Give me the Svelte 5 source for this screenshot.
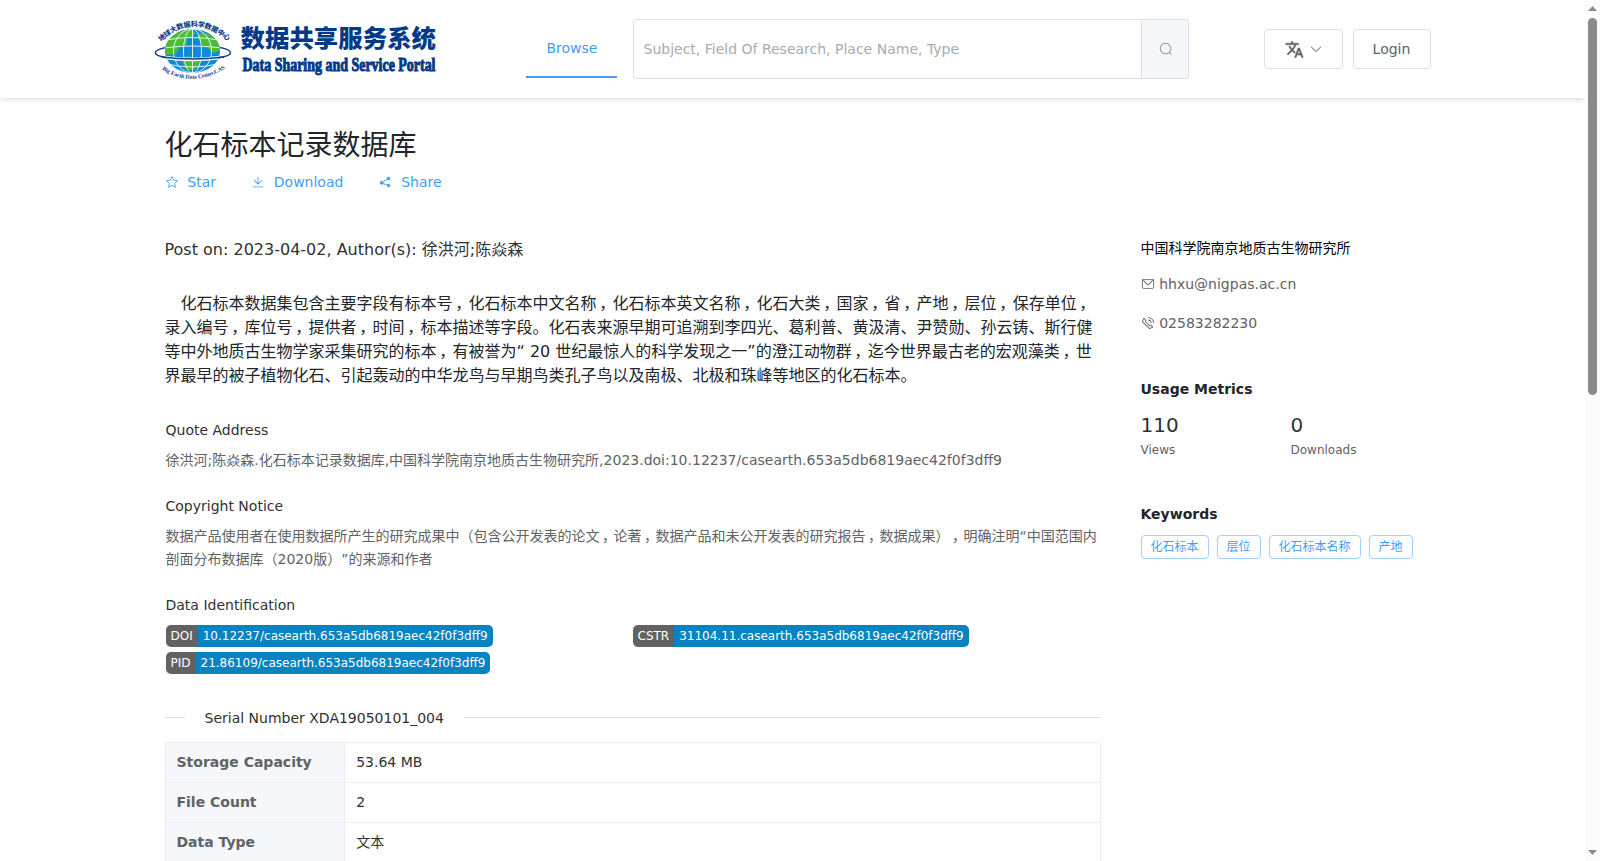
<script>
  const icons = {
    search: 'm795.904 750.72 124.992 124.928a32 32 0 0 1-45.248 45.248L750.656 795.904a416 416 0 1 1 45.248-45.248zM480 832a352 352 0 1 0 0-704 352 352 0 0 0 0 704z',
    down: 'M831.872 340.864 512 652.672 192.128 340.864a30.592 30.592 0 0 0-42.752 0 29.12 29.12 0 0 0 0 41.6L489.664 714.24a32 32 0 0 0 44.672 0l340.288-331.712a29.12 29.12 0 0 0 0-41.728 30.592 30.592 0 0 0-42.752 0z',
    download: 'M160 832h704a32 32 0 1 1 0 64H160a32 32 0 1 1 0-64zm384-253.696 236.288-236.352 45.248 45.248L508.8 704 192 387.2l45.248-45.248L480 584.704V128h64v450.304z',
    share: 'm679.872 348.8-301.76 188.608a127.808 127.808 0 0 1 5.12 52.16l279.936 104.96a128 128 0 1 1-22.464 59.904l-279.872-104.96a128 128 0 1 1-16.64-166.272l301.696-188.608a128 128 0 1 1 33.92 54.272z',
    message: 'M128 224v512a64 64 0 0 0 64 64h640a64 64 0 0 0 64-64V224H128zm0-64h768a64 64 0 0 1 64 64v512a128 128 0 0 1-128 128H192A128 128 0 0 1 64 736V224a64 64 0 0 1 64-64z M904 224 656.512 506.88a192 192 0 0 1-289.024 0L120 224h784zm-698.944 0 210.56 240.704a128 128 0 0 0 192.704 0L818.944 224H205.056z',
    phone: 'M79.36 432.256 591.744 944.64a32 32 0 0 0 35.2 6.784l253.44-108.544a32 32 0 0 0 9.984-52.032l-153.856-153.92a32 32 0 0 0-36.928-6.016l-69.888 34.944L358.08 394.24l35.008-69.888a32 32 0 0 0-5.952-36.928L233.152 133.568a32 32 0 0 0-52.032 10.048L72.512 397.056a32 32 0 0 0 6.784 35.2zm60.48-29.952 81.536-190.08L325.568 316.48l-24.64 49.216-20.608 41.216 32.576 32.64 271.552 271.552 32.64 32.64 41.216-20.672 49.28-24.576 104.192 104.128-190.08 81.472L139.84 402.304zM512 320v-64a256 256 0 0 1 256 256h-64a192 192 0 0 0-192-192zm0-192V64a448 448 0 0 1 448 448h-64a384 384 0 0 0-384-384z'
  };
  const summary = [
    '　化石标本数据集包含主要字段有标本号，化石标本中文名称，化石标本英文名称，化石大类，国家，省，产地，层位，保存单位，',
    '录入编号，库位号，提供者，时间，标本描述等字段。化石表来源早期可追溯到李四光、葛利普、黄汲清、尹赞勋、孙云铸、斯行健',
    '等中外地质古生物学家采集研究的标本，有被誉为“ 20 世纪最惊人的科学发现之一”的澄江动物群，迄今世界最古老的宏观藻类，世',
    '界最早的被子植物化石、引起轰动的中华龙鸟与早期鸟类孔子鸟以及南极、北极和珠峰等地区的化石标本。'
  ];
  const notice = [
    '数据产品使用者在使用数据所产生的研究成果中（包含公开发表的论文，论著，数据产品和未公开发表的研究报告，数据成果），明确注明“中国范围内',
    '剖面分布数据库（2020版）”的来源和作者'
  ];
  const ids = [
    ['DOI', '10.12237/casearth.653a5db6819aec42f0f3dff9'],
    ['CSTR', '31104.11.casearth.653a5db6819aec42f0f3dff9'],
    ['PID', '21.86109/casearth.653a5db6819aec42f0f3dff9']
  ];
  const rows = [['Storage Capacity', '53.64 MB'], ['File Count', '2'], ['Data Type', '文本']];
  const keywords = ['化石标本', '层位', '化石标本名称', '产地'];
</script>

{#snippet icon(name)}
  <svg class="icon" viewBox="0 0 1024 1024"><path fill="currentColor" d={icons[name]} /></svg>
{/snippet}

{#snippet prose(line)}
  <span class="line">{#each line.split('，') as part, i}{#if i}<span class="comma">，</span>{/if}{part}{/each}</span>
{/snippet}

<div class="app">
  <div class="page">
    <header>
      <svg class="logo" width="290" height="68" viewBox="150 14 290 68">
        <defs>
          <clipPath id="globe"><ellipse cx="192.5" cy="51" rx="27.5" ry="22" /></clipPath>
          <path id="arcTop" d="M161 42 Q193 11 229 42" />
          <path id="arcBottom" d="M162 69.500 Q192 89 226 68" />
        </defs>
        <path d="M169 47C151 50 150.500 55.500 169 58C184 60 203 60 217 58C235 55.500 235 50 217 47" fill="none" stroke="#123f8c" stroke-width="1.5" />
        <g clip-path="url(#globe)">
          <rect x="164" y="28" width="58" height="46" fill="#1189d8" />
          <path d="M164 47Q168 33 182 30L190 29L196 33L192 37L187 39L187 44L180 47L176 53L170 55L164 54Z" fill="#4dbb35" />
          <path d="M201 33L210 34L218 42L221 50L214 53L209 49L204 47L200 42L197 37Z M187 56L198 58L200 63L193 71L186 69L182 61Z" fill="#4dbb35" />
          <g fill="none" stroke="#eefaff" stroke-width=".9">
            <ellipse cx="192.5" cy="51" rx="9" ry="22" />
            <ellipse cx="192.5" cy="51" rx="19" ry="22" />
            <path d="M192.500 28V74M166 40Q192 35 219 40M164 48Q192 44 222 48M167 64Q192 70 218 64" />
          </g>
          <path d="M162 57Q192 62 224 57" stroke="#fff" stroke-width="3.400" fill="none" />
        </g>
        <path d="M162 57Q192 61 224 57" stroke="#123f8c" stroke-width="1.400" fill="none" />
        <text class="ring-cn"><textPath href="#arcTop" textLength="75">地球大数据科学数据中心</textPath></text>
        <text class="ring-en"><textPath href="#arcBottom" textLength="67">Big Earth Data Center,CAS</textPath></text>
        <text class="name-cn" x="240.500" y="46.500" textLength="195.500">数据共享服务系统</text>
        <text class="name-en" x="242.500" y="71" textLength="193" lengthAdjust="spacingAndGlyphs">Data Sharing and Service Portal</text>
      </svg>
      <nav>Browse</nav>
      <div class="search">
        <div class="field">Subject, Field Of Research, Place Name, Type</div>
        <div class="go">{@render icon('search')}</div>
      </div>
      <div class="button lang">
        <svg width="19" height="19" viewBox="0 0 24 24"><path fill="currentColor" stroke="currentColor" stroke-width=".6" d="M12.870 15.070l-2.540-2.510.030-.030A17.520 17.520 0 0 0 14.070 6H17V4h-7V2H8v2H1v2h11.170C11.500 7.920 10.440 9.750 9 11.350 8.070 10.320 7.300 9.190 6.690 8h-2c.730 1.630 1.730 3.170 2.980 4.560l-5.090 5.020L4 19l5-5 3.110 3.110.760-2.040zM18.500 10h-2L12 22h2l1.120-3h4.750L21 22h2l-4.500-12zm-2.620 7l1.620-4.330L19.120 17h-3.240z" /></svg>
        {@render icon('down')}
      </div>
      <div class="button login">Login</div>
    </header>

    <h1>化石标本记录数据库</h1>
    <div class="actions">
      <a href="#star"><svg class="icon" viewBox="0 0 1024 1024"><path fill="none" stroke="currentColor" stroke-width="64" stroke-linejoin="round" d="M512 110 635 372 915 412 710 610 760 895 512 760 264 895 314 610 109 412 389 372Z" /></svg>Star</a>
      <a href="#download">{@render icon('download')}Download</a>
      <a href="#share">{@render icon('share')}Share</a>
    </div>

    <div class="columns">
      <main>
        <p class="post">Post on: 2023-04-02, Author(s): 徐洪河;陈焱森</p>
        <p class="summary">{#each summary as line}{@render prose(line)}{/each}</p>
        <section class="quote">
          <h2>Quote Address</h2>
          <p><span class="line">徐洪河;陈焱森.化石标本记录数据库,中国科学院南京地质古生物研究所,2023.doi:10.12237/casearth.653a5db6819aec42f0f3dff9</span></p>
        </section>
        <section class="copyright">
          <h2>Copyright Notice</h2>
          <p>{#each notice as line}{@render prose(line)}{/each}</p>
        </section>
        <section class="identification">
          <h2>Data Identification</h2>
          <div class="badges">
            {#each ids as [kind, value]}
              <div class="badge"><b>{kind}</b><i>{value}</i></div>
            {/each}
          </div>
        </section>
        <div class="divider"><span>Serial Number XDA19050101_004</span></div>
        <div class="table">
          {#each rows as [label, value]}
            <div class="row"><div class="label">{label}</div><div class="value">{value}</div></div>
          {/each}
        </div>
      </main>
      <aside>
        <div class="institute">中国科学院南京地质古生物研究所</div>
        <div class="contact">{@render icon('message')}hhxu@nigpas.ac.cn</div>
        <div class="contact phone">{@render icon('phone')}02583282230</div>
        <h3 class="usage">Usage Metrics</h3>
        <div class="metrics">
          <div><strong>110</strong><small>Views</small></div>
          <div><strong>0</strong><small>Downloads</small></div>
        </div>
        <h3>Keywords</h3>
        <div class="tags">{#each keywords as word}<span>{word}</span>{/each}</div>
      </aside>
    </div>
  </div>
  <div class="scrollbar">
    <svg width="9" height="5" viewBox="0 0 9 5"><path d="M0 5 4.500 0 9 5Z" fill="#8b8b8b" /></svg>
    <div class="thumb"></div>
    <svg width="9" height="5" viewBox="0 0 9 5"><path d="M0 0 4.500 5 9 0Z" fill="#8b8b8b" /></svg>
  </div>
</div>

<style>
  :global(body) { margin: 0; overflow: hidden; background: #fff; }
  .app {
    display: flex;
    height: 861px;
    overflow: hidden;
    font-family: "DejaVu Sans", "Noto Sans CJK SC", sans-serif;
    font-size: 14px;
    text-spacing-trim: space-all;
    color: #303133;
  }
  .app * { box-sizing: border-box; }
  .page { width: 1585px; height: 861px; overflow: hidden; background: #fff; }
  h1, h2, h3, p { margin: 0; font-weight: 400; }
  .icon { width: 14px; height: 14px; flex: none; }

  header {
    display: flex;
    align-items: flex-start;
    height: 98px;
    padding: 14px 0 0 150px;
    box-shadow: 0 2px 5px rgba(0, 0, 0, .12);
  }
  .logo { flex: none; overflow: visible; }
  .ring-cn { font: 900 7px "Noto Sans CJK SC", sans-serif; fill: #123f8c; }
  .ring-en { font: 700 5.8px "Liberation Serif", serif; fill: #123f8c; }
  .name-cn { font: 900 24.4px "Noto Sans CJK SC", sans-serif; fill: #003a88; }
  .name-en { font: 700 18.5px "Liberation Serif", serif; fill: #003a88; stroke: #003a88; stroke-width: 1px; }
  nav {
    width: 91px;
    height: 60px;
    margin: 4px 16px 0 86px;
    padding-left: 1px;
    border-bottom: 2px solid #409eff;
    color: #409eff;
    text-align: center;
    line-height: 60px;
  }
  .search { display: flex; width: 556px; height: 60px; margin-top: 5px; }
  .field {
    width: 509px;
    padding-left: 9.5px;
    border: 1px solid #dcdfe6;
    border-radius: 4px 0 0 4px;
    color: #a8abb2;
    line-height: 58px;
  }
  .go {
    display: flex;
    align-items: center;
    justify-content: center;
    flex: 1;
    padding-left: 1px;
    border: 1px solid #dcdfe6;
    border-left: 0;
    border-radius: 0 4px 4px 0;
    background: #f5f7fa;
    color: #909399;
  }
  .button {
    display: flex;
    align-items: center;
    justify-content: center;
    height: 40px;
    margin-top: 15px;
    border: 1px solid #dcdfe6;
    border-radius: 4px;
    color: #606266;
  }
  .lang { width: 79px; margin-left: 75px; gap: 5px; }
  .login { width: 78px; margin-left: 10px; padding-right: 1px; }

  h1 { padding: 26px 0 0 164.5px; font-size: 28px; line-height: 44px; color: #212529; }
  .actions { display: flex; gap: 35px; padding: 4px 0 0 164.5px; height: 55px; line-height: 20px; }
  .actions a { display: flex; align-items: center; gap: 8.8px; height: 20px; color: #409eff; text-decoration: none; }

  .columns { display: flex; padding: 15px 0 0 164.5px; }
  main { width: 936.5px; }
  .line { display: block; white-space: nowrap; }
  .comma { display: inline-block; width: 1em; padding-left: .17em; font-feature-settings: "halt"; }
  .post { font-size: 16px; line-height: 24px; }
  .summary { margin-top: 30px; font-size: 16px; line-height: 24px; color: #212529; }
  section { padding-left: 1px; }
  section h2 { font-size: 14px; line-height: 22px; }
  section p { font-size: 14px; line-height: 23px; color: #606266; }
  .quote { margin-top: 31px; }
  .quote p { margin-top: 8px; }
  .copyright { margin-top: 23px; }
  .copyright p { margin-top: 8px; }
  .identification { margin-top: 23px; }
  .badges { display: grid; grid-template-columns: 467px 1fr; row-gap: 5px; margin-top: 9px; }
  .badge { display: flex; height: 22px; font-size: 12px; line-height: 22px; color: #fff; white-space: nowrap; }
  .badge b, .badge i { font-weight: 400; font-style: normal; padding: 0 5px; }
  .badge b { background: #626262; border-radius: 5px 0 0 5px; }
  .badge i { background: #0683c1; border-radius: 0 5px 5px 0; }
  .divider { display: flex; align-items: center; height: 20px; margin-top: 33px; }
  .divider::before, .divider::after { content: ""; height: 1px; background: #dcdfe6; }
  .divider::before { width: 20px; }
  .divider::after { flex: 1; }
  .divider span { padding: 2px 20px 0; }
  .table { margin-top: 15px; border: 1px solid #ebeef5; }
  .row { display: flex; height: 40px; border-bottom: 1px solid #ebeef5; line-height: 39px; }
  .label { width: 179px; padding-left: 11px; border-right: 1px solid #ebeef5; background: #f5f7fa; color: #606266; font-weight: 700; }
  .value { padding-left: 11.7px; }

  aside { width: 310px; margin: -2px 0 0 39.5px; }
  .institute { line-height: 24px; color: #000; }
  .contact { display: flex; align-items: center; gap: 4.7px; height: 20px; margin-top: 14px; color: #606266; }
  .phone { margin-top: 19px; }
  h3 { font-size: 14px; font-weight: 700; line-height: 20px; color: #212529; }
  .usage { margin-top: 46px; }
  .metrics { display: flex; height: 105px; padding-top: 13px; }
  .metrics div { width: 150px; }
  .metrics strong, .metrics small { display: block; font-weight: 400; }
  .metrics strong { font-size: 20px; line-height: 26px; }
  .metrics small { margin-top: 4px; font-size: 12px; line-height: 16px; color: #606266; }
  .tags { display: flex; gap: 8px; margin-top: 11px; }
  .tags span { height: 24px; padding: 0 9px; border: 1px solid #a0cfff; border-radius: 4px; color: #409eff; font-size: 12px; line-height: 22px; }

  .scrollbar { display: flex; flex-direction: column; align-items: center; width: 15px; padding: 6px 0; background: #fcfcfc; }
  .scrollbar svg:last-child { margin-top: auto; }
  .thumb { width: 9px; height: 377px; margin-top: 7px; border-radius: 5px; background: #8b8b8b; }
</style>
